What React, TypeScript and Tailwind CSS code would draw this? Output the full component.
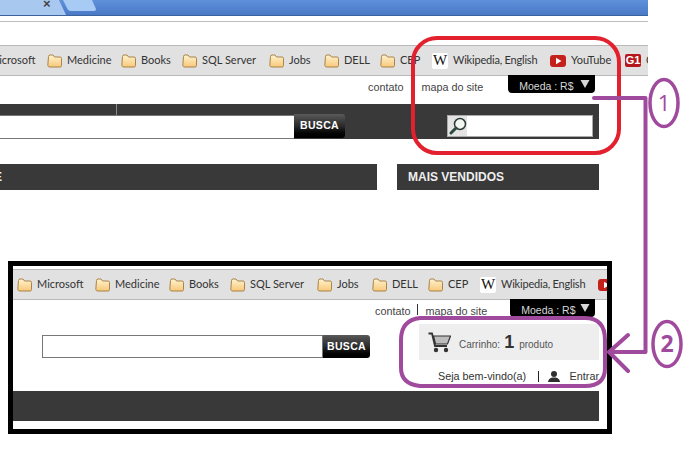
import React from "react";

function Folder() {
  return (
    <svg width="15" height="14" viewBox="0 0 15 14" className="shrink-0">
      <defs>
        <linearGradient id="fg" x1="0" y1="0" x2="0" y2="1">
          <stop offset="0" stopColor="#fff3cf" />
          <stop offset="1" stopColor="#f8c878" />
        </linearGradient>
      </defs>
      <path d="M1.5 2.5 Q1.5 1 3 1 H6 L7.5 3 H13 Q14.5 3 14.5 4.5 V11.5 Q14.5 13 13 13 H3 Q1 13 0.8 11.5 Z" fill="url(#fg)" stroke="#a9834a" strokeWidth="1" />
    </svg>
  );
}

function FolderItem({ label, width }: { label: string; width: string }) {
  return (
    <div className="flex items-center gap-[5px] shrink-0">
      <Folder />
      <span className={width}>{label}</span>
    </div>
  );
}

function Bookmarks({ start }: { start: string }) {
  return (
    <div className="h-[31px] overflow-hidden bg-[#e1e1e1] border-y border-[#b9b9b9]">
      <div
        className={`h-[29px] flex items-center gap-[13px] whitespace-nowrap text-[11px] text-[#333] font-['Lato',sans-serif] ${start}`}
      >
        <FolderItem label="Microsoft" width="w-[45px]" />
        <FolderItem label="Medicine" width="w-[41px]" />
        <FolderItem label="Books" width="w-[28px]" />
        <FolderItem label="SQL Server" width="w-[54px]" />
        <FolderItem label="Jobs" width="w-[22px]" />
        <FolderItem label="DELL" width="w-[23px]" />
        <FolderItem label="CEP" width="w-[19px]" />
        <div className="flex items-center gap-[5px] shrink-0">
          <span className="w-4 h-4 bg-white rounded-[2px] flex items-center justify-center text-[#111] text-[15px] leading-none font-['Liberation_Serif',serif]">
            W
          </span>
          <span className="w-[84px] tracking-[-0.2px]">Wikipedia, English</span>
        </div>
        <div className="flex items-center gap-[5px] shrink-0">
          <svg width="16" height="12" viewBox="0 0 16 12">
            <rect width="16" height="12" rx="3" fill="#c4211c" />
            <path d="M6 2.8 L11.5 6 L6 9.2 Z" fill="#fff" />
          </svg>
          <span className="w-[41px]">YouTube</span>
        </div>
        <div className="flex items-center gap-[5px] shrink-0">
          <span className="w-4 h-[13px] bg-[#b5161c] rounded-[2px] flex items-center justify-center text-white text-[11px] leading-none font-bold font-['Liberation_Sans',sans-serif]">
            G1
          </span>
          <span>G1</span>
        </div>
      </div>
    </div>
  );
}

function Moeda({ width }: { width: string }) {
  return (
    <div
      className={`h-[18px] bg-black rounded-b-[4px] rounded-t-none flex items-start justify-between pl-[11px] pr-[5px] text-[10.5px] text-[#d8d8d8] ${width}`}
    >
      <span className="mt-[4px]">Moeda : R$</span>
      <svg width="10" height="8" viewBox="0 0 10 8" className="mt-[5px]">
        <path d="M0.5 0 H9.5 L5 8 Z" fill="#d8d8d8" />
      </svg>
    </div>
  );
}

function BuscaButton({ size }: { size: string }) {
  return (
    <div
      className={`bg-gradient-to-b from-[#5a5a5a] via-[#2a2a2a] to-black rounded-r-[3px] flex items-center justify-center text-white font-bold text-[10.5px] tracking-[0.3px] ${size}`}
    >
      BUSCA
    </div>
  );
}

function Cart() {
  return (
    <svg width="23" height="21" viewBox="0 0 23 21">
      <path d="M0.5 1.5 H4 L7 14 H19" fill="none" stroke="#333" strokeWidth="1.8" />
      <path d="M5.5 4 H22.5 L19.5 12 H7.5 Z" fill="#bdbdbd" stroke="#333" strokeWidth="1.2" />
      <circle cx="8" cy="18" r="2.2" fill="#333" />
      <circle cx="18" cy="18" r="2.2" fill="#333" />
    </svg>
  );
}

function User() {
  return (
    <svg width="12" height="11" viewBox="0 0 12 11">
      <circle cx="6" cy="3" r="3" fill="#2f2f2f" />
      <path d="M0 11 Q0.5 7 4.5 6.5 H7.5 Q11.5 7 12 11 Z" fill="#2f2f2f" />
    </svg>
  );
}

function Annotations() {
  return (
    <svg className="absolute inset-0" width="699" height="449" viewBox="0 0 699 449" fill="none">
      <rect x="413" y="38" width="206" height="115" rx="24" stroke="#e3202e" strokeWidth="4" />
      <path d="M594 98 H645.5 V352 H609 M628 335 L609 352 L628 371" stroke="#a04a9e" strokeWidth="4" strokeLinecap="round" strokeLinejoin="round" />
      <ellipse cx="664" cy="103" rx="14" ry="23.5" stroke="#a04a9e" strokeWidth="3.5" />
      <ellipse cx="667" cy="344" rx="14" ry="22.5" stroke="#a04a9e" strokeWidth="3.5" />
      <path d="M420 318 H585 Q605 318 605 340 V368 Q605 386 585 386 H420 Q401 384 401 368 V340 Q401 320 420 318 Z" stroke="#a04a9e" strokeWidth="4" />
      <text x="664" y="111" textAnchor="middle" fontSize="22" fill="#a04a9e" fontFamily="Open Sans, sans-serif">1</text>
      <text x="667" y="352" textAnchor="middle" fontSize="23" fontWeight="700" fill="#a04a9e" fontFamily="Open Sans, sans-serif">2</text>
    </svg>
  );
}

export default function App() {
  return (
    <div className="relative w-[699px] h-[449px] overflow-hidden bg-white font-['Liberation_Sans',sans-serif] text-[#444]">
      <div className="w-[648px] overflow-hidden">
        <div className="relative h-4 bg-gradient-to-b from-[#5f90da] to-[#4a79c6] border-b border-[#3b639f]">
          <svg className="absolute left-0 top-0" width="100" height="15" viewBox="0 0 100 15">
            <path d="M0 0 H59 L66 15 H0 Z" fill="#a9c8ef" />
            <path d="M63 0 H92 L96 9 Q96 11 93 11 H71 Q68 11 67 8 Z" fill="#a8cbf5" />
          </svg>
          <span className="absolute left-[43px] top-0 text-[13px] font-bold text-[#444] leading-[8px]">×</span>
        </div>
        <div className="h-[5px]" />
        <div className="h-[25px] border-t border-[#bdbdbd] -mb-px" />
        <Bookmarks start="-ml-[31px]" />
        <div className="h-[29px] -mt-px flex items-start text-[10.8px] pl-[368px]">
          <span className="mt-[4px]">contato</span>
          <span className="mt-[4px] ml-[18px]">mapa do site</span>
          <div className="ml-[25px]">
            <Moeda width="w-[87px]" />
          </div>
        </div>
        <div className="relative w-[599px] h-[35px] bg-[#393939] flex items-start pt-[11px]">
          <div className="w-[294px] h-[24px] bg-white border-y border-[#777]" />
          <BuscaButton size="w-[51px] h-[24px] -mt-px" />
          <div className="ml-[102px] w-[146px] h-[22px] bg-white border border-[#aaa] flex">
            <div className="w-[19px] h-full bg-[#e4e4e4] flex items-center justify-center">
              <svg width="18" height="18" viewBox="0 0 18 18" fill="none">
                <circle cx="11" cy="7" r="5.5" stroke="#2c3a36" strokeWidth="1.5" fill="#f4f6f4" />
                <path d="M7 11 L2 16" stroke="#2c4a42" strokeWidth="3" strokeLinecap="round" />
              </svg>
            </div>
          </div>
          <div className="absolute left-[116px] top-0 w-px h-[11px] bg-[#8a8a8a]" />
        </div>
        <div className="mt-[25px] flex gap-5 w-[599px]">
          <div className="w-[377px] h-[26px] bg-[#393939] text-[#eee] font-bold text-[12px] leading-[26px] -indent-[6px] overflow-hidden">
            E
          </div>
          <div className="w-[202px] h-[26px] bg-[#393939] text-[#eee] font-bold text-[12px] leading-[26px] pl-[11px]">
            MAIS VENDIDOS
          </div>
        </div>
      </div>

      <div className="ml-2 mt-[71px] w-[604px] h-[173px] border-[5px] border-black overflow-hidden bg-white">
        <div className="h-[3px]" />
        <Bookmarks start="ml-[4px]" />
        <div className="h-[18px] -mt-px flex items-start text-[10.8px] pl-[362px]">
          <span className="mt-[4px]">contato</span>
          <span className="mt-[5px] ml-[7px] w-px h-[11px] bg-[#333]" />
          <span className="mt-[4px] ml-[7px]">mapa do site</span>
          <div className="ml-[23px]">
            <Moeda width="w-[85px]" />
          </div>
        </div>
        <div className="h-[74px] flex">
          <div className="flex ml-[29px] mt-[18px] h-[23px]">
            <div className="w-[281px] h-[23px] bg-white border border-[#777]" />
            <BuscaButton size="w-[47px] h-[23px]" />
          </div>
          <div className="ml-[49px] w-[180px] pt-[7px]">
            <div className="h-[36px] bg-[#eeeeee] flex items-center pl-[9px] text-[10px] text-[#555]">
              <Cart />
              <span className="ml-[8px] mt-[5px]">Carrinho:</span>
              <span className="ml-[4px] text-[18px] font-bold text-[#333] leading-none">1</span>
              <span className="ml-[5px] mt-[5px]">produto</span>
            </div>
            <div className="mt-[10px] flex items-center pl-[19px] text-[10.8px] text-[#333] whitespace-nowrap h-[13px]">
              <span>Seja bem-vindo(a)</span>
              <span className="ml-[12px] w-px h-[11px] bg-[#222]" />
              <span className="ml-[9px]"><User /></span>
              <span className="ml-[10px]">Entrar</span>
            </div>
          </div>
        </div>
        <div className="w-[586px] h-[30px] bg-[#393939]" />
      </div>

      <Annotations />
    </div>
  );
}
